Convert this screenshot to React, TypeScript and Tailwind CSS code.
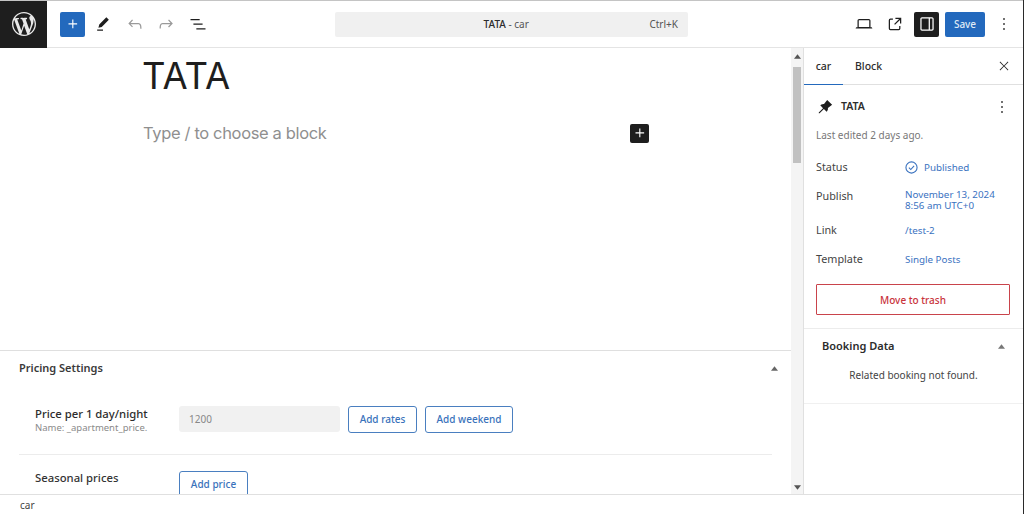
const ui = '[font-family:"Noto_Sans",sans-serif]'

function WpIcon({ d, size = 24, className = '' }: { d: string; size?: number; className?: string }) {
  return (
    <svg viewBox="0 0 24 24" width={size} height={size} fill="currentColor" className={className}>
      <path d={d} />
    </svg>
  )
}

const icons = {
  plus: 'M11 12.5V17.5H12.5V12.5H17.5V11H12.5V6H11V11H6V12.5H11Z',
  pencil: 'm19 7-3-3-8.5 8.5-1 4 4-1L19 7Zm-7 11.5H5V20h7v-1.5Z',
  undo: 'M18.3 11.7c-.6-.6-1.4-.9-2.3-.9H6.7l2.9-3.3-1.1-1-4.5 5L8.5 16l1-1-2.7-2.7H16c.5 0 .9.2 1.3.5 1 1 1 3.4 1 4.5v.3h1.5v-.2c0-1.5 0-4.3-1.5-5.7z',
  redo: 'M15.6 6.5l-1.1 1 2.9 3.3H8c-.9 0-1.7.3-2.3.9-1.4 1.5-1.4 4.2-1.4 5.6v.2h1.5v-.3c0-1.1 0-3.5 1-4.5.3-.3.7-.5 1.3-.5h9.2L14.5 15l1.1 1.1 4.6-4.6-4.6-5z',
  list: 'M3 6h11v1.5H3V6Zm3.5 5.5h11V13h-11v-1.5ZM21 17H10v1.5h11V17Z',
  desktop: 'M20.5 16h-.7V8c0-1.1-.9-2-2-2H6.2c-1.1 0-2 .9-2 2v8h-.7c-.8 0-1.5.7-1.5 1.5h20c0-.8-.7-1.5-1.5-1.5zM5.7 8c0-.3.2-.5.5-.5h11.6c.3 0 .5.2.5.5v7.6H5.7V8z',
  external: 'M19.5 4.5h-7V6h4.44l-5.97 5.97 1.06 1.06L18 7.06v4.44h1.5v-7Zm-13 1a2 2 0 0 0-2 2v10a2 2 0 0 0 2 2h10a2 2 0 0 0 2-2v-3H17v3a.5.5 0 0 1-.5.5h-10a.5.5 0 0 1-.5-.5v-10a.5.5 0 0 1 .5-.5h3V5.5h-3Z',
  drawer: 'M18 4H6c-1.1 0-2 .9-2 2v12c0 1.1.9 2 2 2h12c1.1 0 2-.9 2-2V6c0-1.1-.9-2-2-2zm-4 14.5H6c-.3 0-.5-.2-.5-.5V6c0-.3.2-.5.5-.5h8v13zm4.5-.5c0 .3-.2.5-.5.5h-2.5v-13H18c.3 0 .5.2.5.5v12z',
  more: 'M13 19h-2v-2h2v2zm0-6h-2v-2h2v2zm0-6h-2V5h2v2z',
  close: 'm13.06 12 6.47-6.47-1.06-1.06L12 10.94 5.53 4.47 4.47 5.53 10.94 12l-6.47 6.47 1.06 1.06L12 13.06l6.47 6.47 1.06-1.06L13.06 12Z',
  pin: 'm21.5 9.1-6.6-6.6-4.2 5.6c-1.2-.1-2.4.1-3.6.7-.1 0-.1.1-.2.1-.5.3-.9.6-1.2.9l3.7 3.7-5.7 5.7v1.1h1.1l5.7-5.7 3.7 3.7c.4-.4.7-.8.9-1.2.1-.1.1-.2.2-.3.6-1.1.8-2.4.6-3.6l5.6-4.1z',
}

function WordPressLogo() {
  return (
    <svg viewBox="0 0 20 20" width="24" height="24" fill="currentColor">
      <path d="M20 10c0-5.51-4.49-10-10-10C4.48 0 0 4.49 0 10c0 5.52 4.48 10 10 10 5.51 0 10-4.48 10-10zM7.78 15.37L4.37 6.22c.55-.02 1.17-.08 1.17-.08.5-.06.44-1.13-.06-1.11 0 0-1.45.11-2.37.11-.18 0-.37 0-.58-.01C4.12 2.69 6.87 1.11 10 1.11c2.33 0 4.45.87 6.05 2.34-.68-.11-1.65.39-1.65 1.58 0 .74.45 1.36.9 2.1.35.61.55 1.36.55 2.46 0 1.49-1.4 5-1.4 5l-3.03-8.37c.54-.02.82-.17.82-.17.5-.05.44-1.25-.06-1.22 0 0-1.44.12-2.38.12-.87 0-2.33-.12-2.33-.12-.5-.03-.56 1.2-.06 1.22l.92.08 1.26 3.41zM17.41 10c.24-.64.74-1.87.43-4.25.7 1.29 1.05 2.71 1.05 4.25 0 3.29-1.73 6.24-4.4 7.78.97-2.59 1.94-5.2 2.92-7.78zM6.1 18.09C3.12 16.65 1.11 13.53 1.11 10c0-1.3.23-2.48.72-3.59C3.25 10.3 4.67 14.2 6.1 18.09zm4.03-6.63l2.58 6.98c-.86.29-1.76.45-2.71.45-.79 0-1.57-.11-2.29-.33.81-2.38 1.62-4.74 2.42-7.1z" />
    </svg>
  )
}

function Caret({ down = false }: { down?: boolean }) {
  return (
    <svg viewBox="0 0 8 5" width="7" height="5" fill="currentColor">
      <path d={down ? 'M0 0h8L4 5z' : 'M4 0l4 5H0z'} />
    </svg>
  )
}

function TopBar() {
  return (
    <header className="flex h-[48px] shrink-0 items-center border-t border-b border-t-[#c4c4c4] border-b-[#e4e4e4] bg-white">
      <div className="flex h-[47px] w-[47px] shrink-0 items-center justify-center bg-[#1e1e1e] text-[#e8e8e8]">
        <WordPressLogo />
      </div>
      <div className="ml-[13px] flex h-[25px] w-[25px] items-center justify-center rounded-[2px] bg-[#2369bd] text-white">
        <WpIcon d={icons.plus} size={18} />
      </div>
      <WpIcon d={icons.pencil} size={20} className="ml-[8px] text-[#1e1e1e]" />
      <WpIcon d={icons.undo} size={20} className="ml-[12px] text-[#9a9a9a]" />
      <WpIcon d={icons.redo} size={20} className="ml-[11px] text-[#9a9a9a]" />
      <WpIcon d={icons.list} size={20} className="ml-[12px] text-[#1e1e1e]" />
      <div className="ml-[127px] flex h-[25px] w-[353px] items-center rounded-[2px] bg-[#f0f0f0] pr-[10px] text-[10px] text-[#555]">
        <span className="flex-1 pl-[28px] text-center">
          <span className="font-medium text-[#2c2c2c]">TATA</span> - car
        </span>
        <span>Ctrl+K</span>
      </div>
      <WpIcon d={icons.desktop} size={20} className="ml-[166px] text-[#1e1e1e]" />
      <WpIcon d={icons.external} size={20} className="ml-[11px] text-[#1e1e1e]" />
      <div className="ml-[9px] flex h-[25px] w-[25px] items-center justify-center rounded-[2px] bg-[#1e1e1e] text-white">
        <WpIcon d={icons.drawer} size={20} />
      </div>
      <div className="ml-[6px] flex h-[25px] w-[40px] items-center justify-center rounded-[2px] bg-[#2369bd] text-[10px] font-medium text-[#dfe9f5]">
        Save
      </div>
      <WpIcon d={icons.more} size={20} className="ml-[9px] text-[#1e1e1e]" />
    </header>
  )
}

function OutlineButton({ label, className }: { label: string; className: string }) {
  return (
    <div className={`flex h-[27px] items-center justify-center rounded-[3px] border border-[#4a7fc0] bg-white text-[10px] font-medium text-[#3a72bb] ${className}`}>
      {label}
    </div>
  )
}

function MetaBox() {
  return (
    <section className="h-[144px] shrink-0 overflow-hidden border-t border-[#dfdfdf] px-[19px]">
      <div className="flex h-[35px] items-center justify-between">
        <span className="text-[11px] font-semibold text-[#3a3a3a]">Pricing Settings</span>
        <span className="mr-[-6px] text-[#666]"><Caret /></span>
      </div>
      <div className="mt-[20px] flex h-[49px] items-start border-b border-[#ececec] pl-[16px]">
        <div className="w-[144px] pt-[1px]">
          <div className="text-[11.3px] leading-[14px] font-medium text-[#2c2c2c]">Price per 1 day/night</div>
          <div className="text-[9.5px] leading-[13px] text-[#8a8a8a]">Name: _apartment_price.</div>
        </div>
        <div className="flex h-[26px] w-[161px] items-center rounded-[3px] bg-[#f1f1f1] pl-[10px] text-[10px] text-[#888]">1200</div>
        <OutlineButton label="Add rates" className="ml-[8px] w-[69px]" />
        <OutlineButton label="Add weekend" className="ml-[8px] w-[88px]" />
      </div>
      <div className="mt-[16px] flex items-start pl-[16px]">
        <div className="w-[144px] text-[11.3px] leading-[14px] font-medium text-[#333]">Seasonal prices</div>
        <OutlineButton label="Add price" className="w-[69px]" />
      </div>
    </section>
  )
}

function Scrollbar() {
  return (
    <div className="flex w-[12px] shrink-0 flex-col bg-[#f4f4f4] text-[#555]">
      <div className="flex h-[19px] w-full shrink-0 justify-center pt-[6px] pb-[8px]"><Caret /></div>
      <div className="ml-[2px] h-[96px] w-[8px] shrink-0 bg-[#c1c1c1]" />
      <div className="flex-1" />
      <div className="flex h-[14px] w-full shrink-0 justify-center pt-[5px]"><Caret down /></div>
    </div>
  )
}

function Field({ label, children, className = '' }: { label: string; children: React.ReactNode; className?: string }) {
  return (
    <div className={`flex text-[9.8px] ${className}`}>
      <span className="w-[89px] text-[10.8px] leading-[14px] text-[#444]">{label}</span>
      <div className="leading-[11px] text-[#3a72bf]">{children}</div>
    </div>
  )
}

function Sidebar() {
  return (
    <aside className="flex w-[220px] shrink-0 flex-col border-l border-[#e0e0e0]">
      <div className="flex h-[37px] shrink-0 items-stretch border-b border-[#e0e0e0] text-[10.5px] font-medium text-[#2c2c2c]">
        <div className="mb-[-1px] flex w-[39px] items-center justify-center border-b-[1.5px] border-[#2369bd] pt-[1px]">car</div>
        <div className="ml-[12px] flex items-center pt-[1px]">Block</div>
        <WpIcon d={icons.close} size={14} className="mr-[12px] ml-auto self-center" />
      </div>
      <div className="flex h-[244px] shrink-0 flex-col border-b border-[#ececec] pr-[13px] pl-[12px]">
        <div className="mt-[12px] flex h-[20px] items-center">
          <WpIcon d={icons.pin} size={18} className="text-[#1e1e1e]" />
          <span className="ml-[7px] text-[10.5px] font-semibold text-[#2c2c2c]">TATA</span>
          <WpIcon d={icons.more} size={20} className="mr-[-2px] ml-auto text-[#1e1e1e]" />
        </div>
        <div className="mt-[11px] text-[10px] leading-[14px] text-[#777]">Last edited 2 days ago.</div>
        <Field label="Status" className="mt-[18px] h-[14px] items-center">
          <span className="flex items-center gap-[6px]">
            <svg viewBox="0 0 14 14" width="13" height="13" fill="none" stroke="currentColor" strokeWidth="1.2">
              <circle cx="7" cy="7" r="6" />
              <path d="M4.2 7.2l2 2 3.6-4" />
            </svg>
            Published
          </span>
        </Field>
        <Field label="Publish" className="mt-[15px] h-[22px] items-start">
          November 13, 2024<br />8:56 am UTC+0
        </Field>
        <Field label="Link" className="mt-[12px] h-[14px] items-center">/test-2</Field>
        <Field label="Template" className="mt-[15px] h-[14px] items-center">Single Posts</Field>
        <div className="mt-[18px] flex h-[31px] items-center justify-center rounded-[1px] border border-[#c9434b] pt-[1px] text-[10px] font-medium text-[#c9343c]">
          Move to trash
        </div>
      </div>
      <div className="h-[75px] shrink-0 border-b border-[#f0f0f0] px-[18px]">
        <div className="flex h-[35px] items-center justify-between">
          <span className="text-[11px] font-semibold text-[#2c2c2c]">Booking Data</span>
          <span className="text-[#777]"><Caret /></span>
        </div>
        <div className="mt-[-3px] text-center text-[10px] leading-[28px] text-[#444]">Related booking not found.</div>
      </div>
    </aside>
  )
}

export default function App() {
  return (
    <div className={`flex h-[514px] w-[1024px] flex-col overflow-hidden border-r border-[#2a2a2a] bg-white ${ui}`}>
      <TopBar />
      <div className="flex min-h-0 flex-1">
        <div className="flex min-w-0 flex-1 flex-col">
          <main className="min-h-0 flex-1 pr-[142px] pl-[142px] [font-family:Inter,sans-serif]">
            <h1 className="mt-[4px] text-[36.5px] leading-[48px] font-normal text-[#1e1e1e]">TATA</h1>
            <div className="mt-[24px] flex h-[18px] items-center justify-between">
              <span className="ml-[1px] text-[16.5px] tracking-[-0.35px] text-[#8f8f8f]">Type / to choose a block</span>
              <span className="flex h-[19px] w-[19px] items-center justify-center rounded-[2px] bg-[#1e1e1e] text-white">
                <WpIcon d={icons.plus} size={18} />
              </span>
            </div>
          </main>
          <MetaBox />
        </div>
        <Scrollbar />
        <Sidebar />
      </div>
      <footer className="flex h-[20px] shrink-0 items-center border-t border-[#e0e0e0] pt-[1px] pl-[20px] text-[10px] text-[#444]">car</footer>
    </div>
  )
}
